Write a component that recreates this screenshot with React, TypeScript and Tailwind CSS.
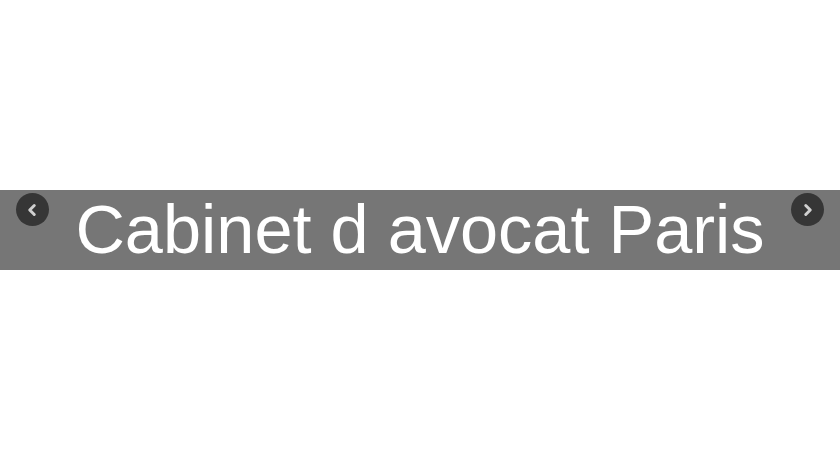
import { ChevronLeft, ChevronRight } from 'lucide-react';

function ArrowButton({ side }: { side: 'left' | 'right' }) {
  const pos = side === 'left' ? 'left-[16px]' : 'right-[16px]';
  return (
    <button
      type="button"
      className={`absolute top-[3px] ${pos} w-[33px] h-[33px] rounded-full bg-[#363636] flex items-center justify-center`}
    >
      {side === 'left' ? (
        <ChevronLeft className="w-[18px] h-[18px] text-[#d0d0d0] -ml-[1px]" strokeWidth={4} />
      ) : (
        <ChevronRight className="w-[18px] h-[18px] text-[#d0d0d0] ml-[1px]" strokeWidth={4} />
      )}
    </button>
  );
}

export default function App() {
  return (
    <div className="w-[840px] h-[460px] bg-white overflow-hidden font-['Liberation_Sans',Arial,sans-serif]">
      <div className="h-[190px]" />
      <div className="relative h-[80px] bg-[#767676] flex items-center justify-center">
        <ArrowButton side="left" />
        <h1 className="text-[68.5px] leading-[80px] text-white font-normal whitespace-nowrap">
          Cabinet d avocat Paris
        </h1>
        <ArrowButton side="right" />
      </div>
    </div>
  );
}
